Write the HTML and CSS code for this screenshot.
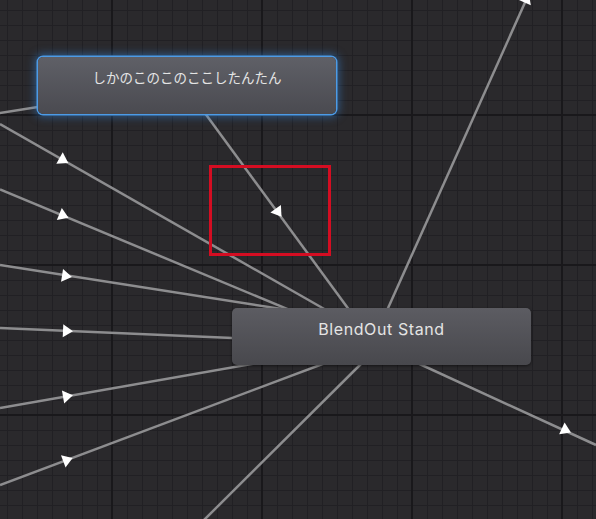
FILE: index.html
```html
<!DOCTYPE html>
<html lang="ja">
<head>
    <meta charset="UTF-8">
    <meta name="viewport" content="width=device-width, initial-scale=1.0">
    <title>Animator</title>
    <link rel="stylesheet" href="styles.css">
</head>
<body>
    <div class="graph">
        <!-- Transitions -->
        <svg class="edges" width="596" height="519" viewBox="0 0 596 519">
            <defs>
                <polygon id="arrow" points="6,0 -4,6.5 -4,-6.5"/>
            </defs>
            <g class="edge-lines">
                <line x1="-2" y1="113.3" x2="60" y2="103.4"/>
                <line x1="0" y1="124" x2="340" y2="318"/>
                <line x1="0" y1="189.3" x2="320" y2="322.7"/>
                <line x1="0" y1="265" x2="320" y2="315"/>
                <line x1="0" y1="328" x2="300" y2="341"/>
                <line x1="0" y1="408" x2="300" y2="355.5"/>
                <line x1="0" y1="485" x2="340" y2="357.5"/>
                <line x1="203" y1="521" x2="370" y2="355"/>
                <line x1="199" y1="105" x2="358" y2="322"/>
                <line x1="596" y1="445" x2="400" y2="355"/>
                <line x1="527" y1="-2" x2="380" y2="326"/>
            </g>
            <g class="edge-arrows">
                <use href="#arrow" transform="translate(63 160) rotate(29.7)"/>
                <use href="#arrow" transform="translate(63 215.5) rotate(22.6)"/>
                <use href="#arrow" transform="translate(66 276) rotate(9)"/>
                <use href="#arrow" transform="translate(67 331) rotate(2.5)"/>
                <use href="#arrow" transform="translate(67 396.3) rotate(-9.9)"/>
                <use href="#arrow" transform="translate(67 460) rotate(-20.6)"/>
                <use href="#arrow" transform="translate(278 212) rotate(53.8)"/>
                <use href="#arrow" transform="translate(565.5 430) rotate(24.8)"/>
                <use href="#arrow" transform="translate(526.5 -1) rotate(-65.9)"/>
            </g>
        </svg>

        <!-- States -->
        <div class="state state-selected state-shikanoko">しかのこのこのここしたんたん</div>
        <div class="state state-blendout">BlendOut Stand</div>

        <!-- Annotation -->
        <div class="highlight"></div>
    </div>
</body>
</html>
```

FILE: styles.css
```css
body {
    margin: 0;
    padding: 0;
    background-color: #2a292c;
    font-family: Inter, "Noto Sans CJK JP", sans-serif;
}
.graph {
    position: relative;
    width: 596px;
    height: 519px;
    overflow: hidden;
    background-color: #2a292c;
    background-image:
        linear-gradient(to right, #19181b 2px, transparent 2px),
        linear-gradient(to bottom, #19181b 2px, transparent 2px),
        linear-gradient(to right, #212024 1px, transparent 1px),
        linear-gradient(to bottom, #212024 1px, transparent 1px);
    background-size: 150px 100%, 100% 150px, 15px 100%, 100% 15px;
    background-position: 111px 0, 0 114px, 7px 0, 0 10px;
}
.edges {
    position: absolute;
    left: 0;
    top: 0;
}
.edge-lines line {
    stroke: #8d8d8f;
    stroke-width: 2.5;
}
.edge-arrows use {
    fill: #ffffff;
}
.state {
    position: absolute;
    box-sizing: border-box;
    height: 57px;
    padding-top: 10px;
    border-radius: 5px;
    background: linear-gradient(to bottom, #5c5c62, #48484d);
    box-shadow: 0 1px 3px rgba(0, 0, 0, 0.5);
    color: #e4e4e4;
    text-align: center;
    line-height: 22px;
}
.state-selected {
    box-shadow: 0 0 0 1.5px #4d9be6, 0 0 8px 3px rgba(55, 135, 220, 0.5);
}
.state-shikanoko {
    left: 38px;
    top: 57px;
    width: 298px;
    font-size: 13.5px;
    background: linear-gradient(to bottom, #5f6067, #4a4a50);
}
.state-blendout {
    left: 232px;
    top: 308px;
    width: 299px;
    font-size: 16px;
    letter-spacing: 0.6px;
}
.highlight {
    position: absolute;
    left: 209px;
    top: 165px;
    width: 116px;
    height: 85px;
    border: 3px solid #d40d22;
}
```
